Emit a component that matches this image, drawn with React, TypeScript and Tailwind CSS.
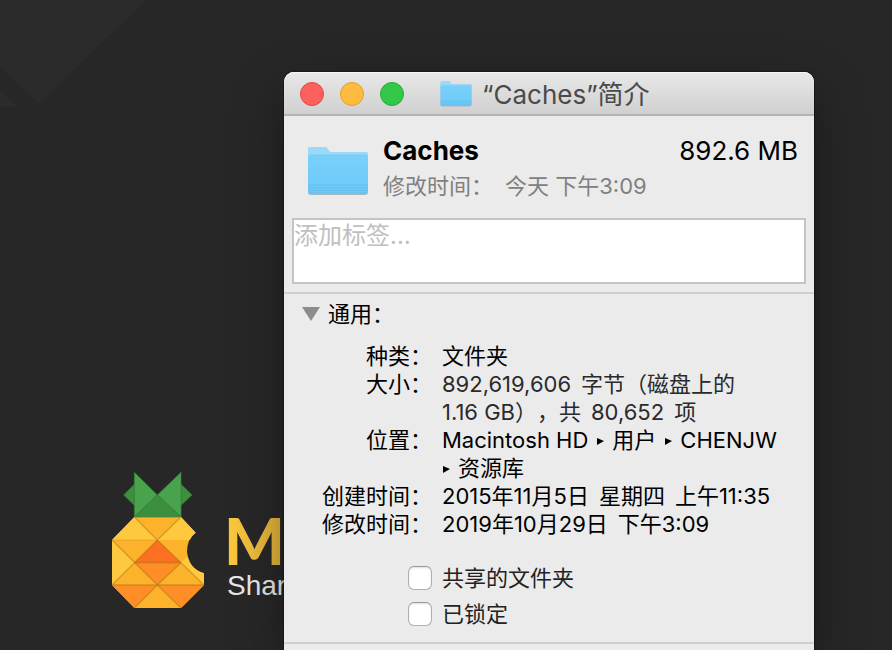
import { useState } from "react";
import type { ReactNode } from "react";

const Pineapple = () => (
  <svg viewBox="21 21 276 408" className="h-[136px] w-[92px] shrink-0" aria-hidden="true">
    {/* Leaves */}
    <g stroke="#38813a" strokeWidth="2" strokeLinejoin="round">
      <path d="M56 90 88 58V121ZM261 90 228 58V121Z" fill="#3d8f40" />
      <path d="M88 22 157 90 88 156ZM228 22 157 90 228 156Z" fill="#49a34d" />
      <path d="M157 90 228 156H88Z" fill="#3d8f40" />
    </g>

    {/* Body */}
    <path d="M88 156H228L272 203Q246 222 246 260Q252 311 297 325V360L228 429H88L21 360V225Z" fill="#fdb22b" />
    <path d="M88 156 157 225H21ZM228 156 272 203Q261 210 254 225H157ZM21 225 88 293 21 360Z" fill="#fec93f" />
    <path d="M246 275Q256 312 297 325V360L228 293Z" fill="#fec93f" />
    <path d="M157 225 228 293H88Z" fill="#fd6f21" />
    <path d="M88 293H228L157 360ZM21 360H157L88 429ZM157 360H297L228 429Z" fill="#fe8e25" />

    {/* Facet lines */}
    <g fill="none" stroke="#9a6a10" strokeOpacity="0.4" strokeWidth="4">
      <path d="M88 157H228M88 156 157 225 228 156M157 225 228 293 297 360M157 225 21 360M21 225 157 360 228 429M88 429 157 360 228 293" />
      <path d="M88 293H228M21 360H297" strokeWidth="5" />
      <path d="M21 225H157" strokeOpacity="0.15" />
    </g>
  </svg>
);

const Wallpaper = () => (
  <div className="absolute inset-0 overflow-hidden" aria-hidden="true">
    <svg className="absolute top-0 left-0 h-[110px] w-[150px]" viewBox="0 0 150 110">
      <path d="M0 0H146L39 104 0 66Z" fill="#2b2b2b" />
      <path d="M0 89 18 107H0Z" fill="#2b2b2b" />
    </svg>
    <div className="absolute top-[472px] left-[112px] flex gap-5">
      <Pineapple />
      <div className="pt-9">
        <div className="bg-linear-to-r from-[#fdc93f] to-[#dcae38] bg-clip-text font-['Lato'] text-[64px] leading-[66px] font-black text-transparent">
          M
        </div>
        <div className="-mt-1 pl-[3px] font-['Liberation_Sans'] text-[28px] leading-8 text-[#e8e8e8]">Shar</div>
      </div>
    </div>
  </div>
);

const FolderIcon = ({ className }: { className: string }) => (
  <svg viewBox="0 0 62 50" className={className} aria-hidden="true">
    <defs>
      <linearGradient id="folder-front" x1="0" y1="0" x2="0" y2="1">
        <stop offset="0" stopColor="#7ad0fa" />
        <stop offset="1" stopColor="#6bcaf9" />
      </linearGradient>
    </defs>
    <path d="M1 45V4Q1 1 4 1H17Q19 1 20 3L21 5Q22 6 24 6H58Q61 6 61 9V46Q61 49 58 49H4Q1 49 1 46Z" fill="#a9b8c0" />
    <path d="M1 45V3Q1 1 3 1H18Q20 1 21 3L22 5Q23 6 25 6H59Q61 6 61 8V20H1Z" fill="#98dafa" />
    <path d="M1 11Q1 9 3 9H59Q61 9 61 11V45Q61 48 58 48H4Q1 48 1 45Z" fill="url(#folder-front)" />
    <path d="M2 9H60" stroke="#74c4ee" strokeWidth="0.6" />
    <path d="M1 39H61M1 42H61M1 44.5H61M2 47H60" stroke="#5fbbe9" strokeWidth="0.8" />
  </svg>
);

const InfoRow = ({ label, children }: { label: string; children: ReactNode }) => (
  <>
    <dt className="text-right">{label}</dt>
    <dd>{children}</dd>
  </>
);

// One line of a value, its parts set slightly apart
const Line = ({ parts }: { parts: string[] }) => (
  <span className="flex gap-[10px] whitespace-nowrap">
    {parts.map((part) => (
      <span key={part}>{part}</span>
    ))}
  </span>
);

const Arrow = () => (
  <svg viewBox="0 0 8 8" className="mr-2 mb-[2px] inline-block size-2" aria-hidden="true">
    <path d="M1 1 8 4 1 8Z" fill="black" />
  </svg>
);

const Option = ({ label }: { label: string }) => {
  const [checked, setChecked] = useState(false);

  return (
    <label className="flex items-center gap-[10px] text-[#222]">
      <input
        type="checkbox"
        checked={checked}
        onChange={(e) => setChecked(e.target.checked)}
        className="size-6 appearance-none rounded-md border border-[#b0b0b0] border-t-[#989898] bg-white shadow-[inset_0_1px_2px_#ddd] checked:bg-[#3b82f6]"
      />
      {label}
    </label>
  );
};

const App = () => {
  const [open, setOpen] = useState(true);

  return (
    <main
      lang="zh-CN"
      className="relative flex min-h-screen flex-col bg-[#272727] pt-[72px] pr-[78px] pl-[284px] font-['Inter','Noto_Sans_CJK_SC',sans-serif] text-[22px] leading-7 text-black [text-spacing-trim:space-all]"
    >
      <Wallpaper />

      <section className="relative flex flex-1 flex-col rounded-t-[10px] bg-[#ebebeb] shadow-[0_20px_50px_rgba(0,0,0,0.35),0_0_2px_#000]">
        {/* Title bar */}
        <header className="flex h-11 items-center rounded-t-[10px] border-b-2 border-[#b4b4b4] bg-linear-to-b from-[#e8e8e8] to-[#d0d0d0] pt-[2px] pl-4 shadow-[inset_0_1px_0_#f5f5f5]">
          <div className="flex gap-4">
            <button aria-label="关闭" className="size-6 rounded-full border border-[#e2463f] bg-[#fc615d]" />
            <button aria-label="最小化" className="size-6 rounded-full border border-[#dfa023] bg-[#fdbc40]" />
            <button aria-label="缩放" className="size-6 rounded-full border border-[#1dad2b] bg-[#34c84a]" />
          </div>
          <FolderIcon className="ml-9 h-[26px] w-8" />
          <h1 className="ml-[10px] pt-[2px] text-[26px] leading-8 text-[#4a4a4a]">“Caches”简介</h1>
        </header>

        {/* Summary */}
        <div className="flex items-start pt-4 pr-4 pl-[23px]">
          <FolderIcon className="mt-[14px] h-[50px] w-[62px]" />
          <div className="ml-[14px] flex-1">
            <div className="flex justify-between text-[26px] leading-[38px]">
              <h2 className="font-bold">Caches</h2>
              <span>892.6 MB</span>
            </div>
            <p className="mt-[2px] flex gap-3 text-[#808080]">
              <span>修改时间：</span>
              <span>今天 下午3:09</span>
            </p>
          </div>
        </div>

        <div className="border-b-2 border-[#d0d0d0] px-2 pt-[18px] pb-2">
          <textarea
            aria-label="添加标签"
            placeholder="添加标签…"
            className="block h-[66px] w-full resize-none border-2 border-[#c4c4c4] bg-white text-2xl leading-8 outline-none placeholder:text-[#c0c0c0]"
          />
        </div>

        {/* General */}
        <div className="border-b-2 border-[#d0d0d0] pt-[6px] pb-[14px]">
          <button onClick={() => setOpen(!open)} aria-expanded={open} className="ml-[18px] flex items-center gap-2">
            <svg viewBox="0 0 18 14" className="h-[14px] w-[18px]" aria-hidden="true">
              <path d="M0 0H18L9 14Z" fill="#8c8c8c" />
            </svg>
            通用：
          </button>
          {open && (
            <>
              <dl className="mt-[14px] grid grid-cols-[148px_1fr] gap-x-[10px] pr-8">
                <InfoRow label="种类：">文件夹</InfoRow>
                <InfoRow label="大小：">
                  <div className="text-[#2a2a2a]">
                    <Line parts={["892,619,606", "字节（磁盘上的"]} />
                    <Line parts={["1.16 GB），共", "80,652", "项"]} />
                  </div>
                </InfoRow>
                <InfoRow label="位置：">
                  <span className="mr-2">Macintosh HD</span>
                  <Arrow />
                  <span className="mr-2">用户</span>
                  <Arrow />
                  CHENJW
                  <br />
                  <Arrow />
                  资源库
                </InfoRow>
                <InfoRow label="创建时间：">
                  <Line parts={["2015年11月5日", "星期四", "上午11:35"]} />
                </InfoRow>
                <InfoRow label="修改时间：">
                  <Line parts={["2019年10月29日", "下午3:09"]} />
                </InfoRow>
              </dl>
              <div className="mt-[26px] ml-[124px] flex flex-col gap-2">
                <Option label="共享的文件夹" />
                <Option label="已锁定" />
              </div>
            </>
          )}
        </div>
      </section>
    </main>
  );
};

export default App;
